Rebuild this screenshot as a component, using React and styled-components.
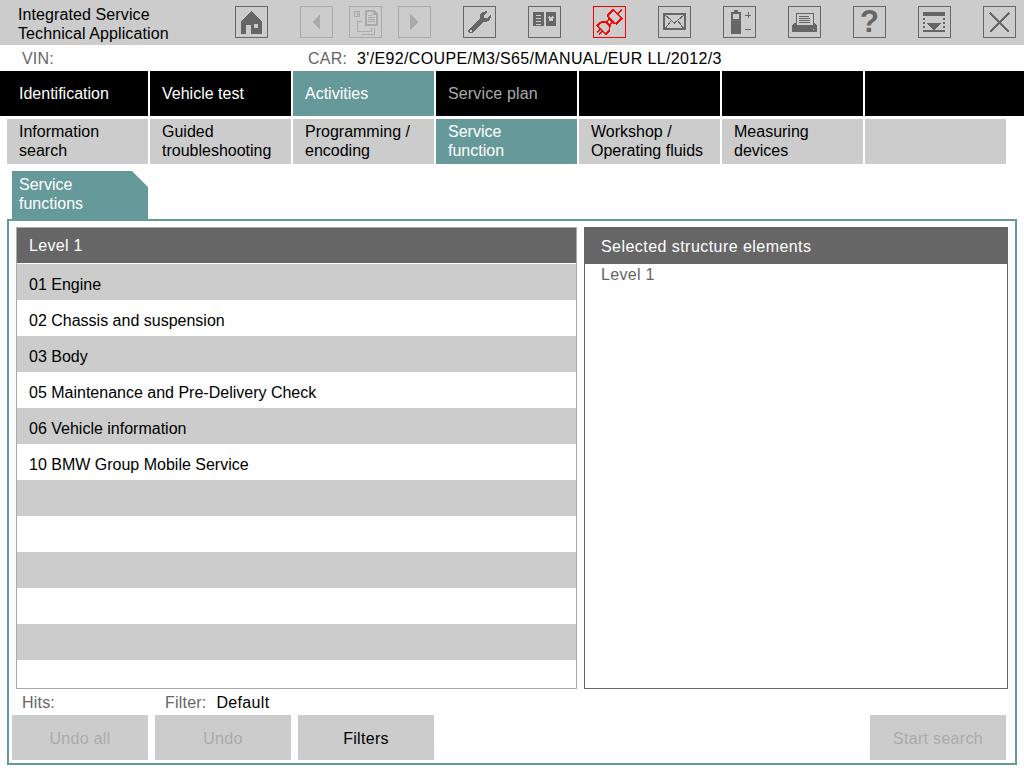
import React from 'react'
import styled, { createGlobalStyle } from 'styled-components'

const TOP_NAV = [
  { label: 'Identification' },
  { label: 'Vehicle test' },
  { label: 'Activities', active: true },
  { label: 'Service plan', dim: true },
  { label: '' },
  { label: '' },
]

const SUB_NAV = [
  { label: ['Information', 'search'] },
  { label: ['Guided', 'troubleshooting'] },
  { label: ['Programming /', 'encoding'] },
  { label: ['Service', 'function'], active: true },
  { label: ['Workshop /', 'Operating fluids'] },
  { label: ['Measuring', 'devices'] },
]

const ROWS = [
  '01 Engine',
  '02 Chassis and suspension',
  '03 Body',
  '05 Maintenance and Pre-Delivery Check',
  '06 Vehicle information',
  '10 BMW Group Mobile Service',
  '', '', '', '', '', '',
]

const App = () => {
  return (
    <Page>
      <GlobalStyle />
      <Toolbar>
        <AppTitle>Integrated Service<br />Technical Application</AppTitle>
        <IconButton><Svg><path fillRule="evenodd" d="M16.500 5 27 15.500V28H16V19H11V28H6V15.500ZM19 18v4h4v-4Z" fill="currentColor" /></Svg></IconButton>
        <IconButton $off $wide><Svg><path d="M20 8 12 16 20 24Z" fill="currentColor" /></Svg></IconButton>
        <IconButton $off>
          <Svg>
            <g fill="none" stroke="currentColor">
              <circle cx="8" cy="8" r="3" />
              <path d="M8 6v2h2" />
              <path d="M8 25V15h5M8 25h14v-3M12 28h13v-6" />
            </g>
            <path d="M16 4h9l4 4v12H16Z" fill="currentColor" />
            <path d="M18 6h6v3h3v9h-9Z" fill="#ccc" />
            <path d="M19 9h4M19 11h7M19 13h7M19 15h7" stroke="currentColor" />
          </Svg>
        </IconButton>
        <IconButton $off><Svg><path d="M12 8 20 16 12 24Z" fill="currentColor" /></Svg></IconButton>
        <IconButton $wide>
          <Svg>
            <path d="M24.500 5.500 20.500 9.500 21.500 12 24 12.500 28 8.500C28.500 12 26.500 16 22 16L20.500 15.800 10 26.500C8.500 28 6 27.500 5.500 26 5 24.500 5.500 23.500 6.500 22.500L17 12C16 8 19 4.500 24.500 5.500Z" fill="currentColor" />
            <circle cx="8" cy="25" r="1" fill="#ccc" />
          </Svg>
        </IconButton>
        <IconButton $wide>
          <Svg>
            <path d="M5 6h11v14H5ZM18 6h10v14H18Z" fill="currentColor" />
            <path d="M8 9h5M8 12h5M8 15h5M8 18h5" stroke="#ccc" />
            <path d="M21 11l4 4M25 11l-4 4" stroke="#ccc" strokeWidth="1.500" />
          </Svg>
        </IconButton>
        <IconButton $wide $alert>
          <Svg>
            <g transform="rotate(-45 16.500 16)" fill="none" stroke="currentColor" strokeWidth="1.500">
              <path d="M0 14.500h5M0 17.500h5M28 16h6" />
              <path d="M5 10h5l4 3v6l-4 3H5Z" />
              <path d="M20 10h8v12h-8l-1-2v-8Z" />
              <path d="M14 14h5M14 18h5" />
            </g>
          </Svg>
        </IconButton>
        <IconButton $wide>
          <Svg>
            <rect x="6" y="8" width="21" height="15" fill="none" stroke="currentColor" strokeWidth="2.500" />
            <path d="M7 9l9.500 8L26 9M7 23l6-8M26 23l-6-8" fill="none" stroke="currentColor" />
          </Svg>
        </IconButton>
        <IconButton $wide>
          <Svg>
            <path d="M11 4h4v2h3v22H8V6h3Z" fill="currentColor" />
            <path d="M10 8h6v5h-6Z" fill="#ccc" />
            <path d="M22 9h6M25 6v6M22 23h6" stroke="currentColor" />
          </Svg>
        </IconButton>
        <IconButton $wide>
          <Svg>
            <path d="M8 7h17v12H8Z" fill="#ccc" stroke="currentColor" />
            <path d="M11 10h10M11 12h11M11 14h11M11 16h11" stroke="currentColor" />
            <path d="M6 17h2v3h17v-3h2l2 3v6H4V20Z" fill="currentColor" />
            <path d="M25 23h1" stroke="#ccc" />
          </Svg>
        </IconButton>
        <IconButton $wide><Glyph>?</Glyph></IconButton>
        <IconButton $wide>
          <Svg>
            <path d="M5 6h22v4H5ZM5 24h22v2H5ZM8 17h16l-8 7Z" fill="currentColor" />
            <path d="M6 12v11M26 12v11" stroke="currentColor" strokeWidth="2" strokeDasharray="2 2" fill="none" />
          </Svg>
        </IconButton>
        <IconButton $wide>
          <Svg><path d="M7 7l19 19M26 7 7 26" stroke="currentColor" strokeWidth="2.500" /></Svg>
        </IconButton>
      </Toolbar>

      <InfoRow>
        <Field $width={286}>VIN:</Field>
        <Field>CAR:<Value $wide>3'/E92/COUPE/M3/S65/MANUAL/EUR LL/2012/3</Value></Field>
      </InfoRow>

      <TopNav>
        {TOP_NAV.map((item, i) => (
          <TopNavItem key={i} $active={item.active} $dim={item.dim}>{item.label}</TopNavItem>
        ))}
        <TopNavFill />
      </TopNav>

      <SubNav>
        {SUB_NAV.map((item, i) => (
          <SubNavItem key={i} $active={item.active}>{item.label[0]}<br />{item.label[1]}</SubNavItem>
        ))}
        <SubNavItem />
      </SubNav>

      <Tab>Service<br />functions</Tab>

      <Panel>
        <Columns>
          <ListBox>
            <ListHeader>Level 1</ListHeader>
            {ROWS.map((row, i) => (
              <ListRow key={i} $shaded={i % 2 === 0}>{row}</ListRow>
            ))}
          </ListBox>
          <SelectedBox>
            <SelectedHeader>Selected structure elements</SelectedHeader>
            <SelectedItem>Level 1</SelectedItem>
          </SelectedBox>
        </Columns>

        <StatusRow>
          <Field $width={143}>Hits:</Field>
          <Field>Filter:<Value>Default</Value></Field>
        </StatusRow>

        <Footer>
          <ActionButton disabled>Undo all</ActionButton>
          <ActionButton disabled>Undo</ActionButton>
          <ActionButton>Filters</ActionButton>
          <Spacer />
          <ActionButton disabled>Start search</ActionButton>
        </Footer>
      </Panel>
    </Page>
  )
}

const Svg = ({ children }) => (
  <svg width="31" height="30" viewBox="1 1 31 30" shapeRendering="crispEdges">{children}</svg>
)

export default App

const GlobalStyle = createGlobalStyle`
  html, body {
    margin: 0;
    padding: 0;
    background: #fff;
  }
  * {
    box-sizing: border-box;
  }
`

const Page = styled.div`
  width: 1024px;
  height: 768px;
  overflow: hidden;
  background: #fff;
  color: #000;
  font-family: "Liberation Sans", Arial, sans-serif;
  font-size: 16px;
  display: flex;
  flex-direction: column;
`

const Toolbar = styled.div`
  height: 45px;
  flex: none;
  background: #ccc;
  display: flex;
  align-items: flex-start;
  padding-top: 6px;
`

const AppTitle = styled.div`
  width: 235px;
  margin-top: -1px;
  padding-left: 18px;
  line-height: 19px;
  letter-spacing: 0.1px;
`

const IconButton = styled.div`
  width: 33px;
  height: 32px;
  flex: none;
  display: flex;
  align-items: center;
  justify-content: center;
  margin-left: ${props => (props.$wide ? '32px' : '16px')};
  border: 1px solid ${props => (props.$alert ? '#f00' : props.$off ? '#aaa' : '#666')};
  color: ${props => (props.$alert ? '#f00' : props.$off ? '#aaa' : '#666')};

  &:nth-child(2) {
    margin-left: 0;
  }
`

const Glyph = styled.span`
  font-size: 31px;
  font-weight: 700;
  line-height: 30px;
`

const InfoRow = styled.div`
  height: 26px;
  flex: none;
  display: flex;
  align-items: center;
  padding: 1px 0 0 22px;
`

const Field = styled.div`
  width: ${props => (props.$width ? `${props.$width}px` : 'auto')};
  color: #666;
  letter-spacing: 0.2px;
  white-space: nowrap;
`

const Value = styled.span`
  color: #000;
  margin-left: 10px;
  letter-spacing: 0.35px;
`

const TopNav = styled.div`
  height: 45px;
  flex: none;
  background: #000;
  display: flex;
  padding-left: 7px;
`

const TopNavItem = styled.div`
  width: 143px;
  display: flex;
  align-items: center;
  padding: 1px 0 0 12px;
  border-right: 2px solid #fff;
  background: ${props => (props.$active ? '#669999' : '#000')};
  color: ${props => (props.$dim ? '#aaa' : '#fff')};
  letter-spacing: ${props => (props.$dim ? '0.15px' : '0')};
`

const TopNavFill = styled.div`
  flex: 1;
`

const SubNav = styled.div`
  height: 45px;
  flex: none;
  margin-top: 3px;
  display: flex;
  gap: 2px;
  padding: 0 0 0 7px;
`

const SubNavItem = styled.div`
  width: 141px;
  display: flex;
  align-items: center;
  padding: 0 0 2px 12px;
  line-height: 19px;
  white-space: nowrap;
  background: ${props => (props.$active ? '#669999' : '#ccc')};
  color: ${props => (props.$active ? '#fff' : '#000')};
`

const Tab = styled.div`
  width: 136px;
  height: 48px;
  flex: none;
  margin: 7px 0 0 12px;
  padding: 4px 0 0 7px;
  line-height: 19px;
  background: #669999;
  color: #fff;
  clip-path: polygon(0 0, 120px 0, 100% 16px, 100% 100%, 0 100%);
`

const Panel = styled.div`
  width: 1010px;
  height: 546px;
  flex: none;
  margin-left: 7px;
  border: 2px solid #669999;
  padding: 6px 7px 3px 3px;
  display: flex;
  flex-direction: column;
`

const Columns = styled.div`
  height: 462px;
  flex: none;
  margin-left: 4px;
  display: flex;
  gap: 7px;
`

const ListBox = styled.div`
  width: 561px;
  overflow: hidden;
  border: 1px solid #aaa;
`

const ListHeader = styled.div`
  height: 36px;
  display: flex;
  align-items: center;
  padding: 0 0 0 12px;
  background: #666;
  color: #fff;
  letter-spacing: 0.3px;
  border-bottom: 1px solid #fff;
`

const ListRow = styled.div`
  height: 36px;
  display: flex;
  align-items: center;
  padding: 6px 0 0 12px;
  background: ${props => (props.$shaded ? '#ccc' : '#fff')};
`

const SelectedBox = styled.div`
  width: 424px;
  border: 1px solid #666;
  border-top: 0;
`

const SelectedHeader = styled.div`
  height: 37px;
  display: flex;
  align-items: center;
  margin: 0 -1px;
  padding: 2px 0 0 17px;
  background: #666;
  color: #fff;
  letter-spacing: 0.45px;
`

const SelectedItem = styled.div`
  padding: 1px 0 0 16px;
  line-height: 19px;
  letter-spacing: 0.3px;
  color: #666;
`

const StatusRow = styled.div`
  height: 26px;
  flex: none;
  display: flex;
  align-items: center;
  padding: 2px 0 0 10px;
`

const Footer = styled.div`
  height: 45px;
  flex: none;
  display: flex;
  gap: 7px;
  padding-right: 2px;
`

const ActionButton = styled.div`
  width: 136px;
  display: flex;
  align-items: center;
  justify-content: center;
  padding-top: 2px;
  background: #ccc;
  letter-spacing: 0.3px;
  color: ${props => (props.disabled ? '#aaa' : '#000')};
`

const Spacer = styled.div`
  flex: 1;
`
